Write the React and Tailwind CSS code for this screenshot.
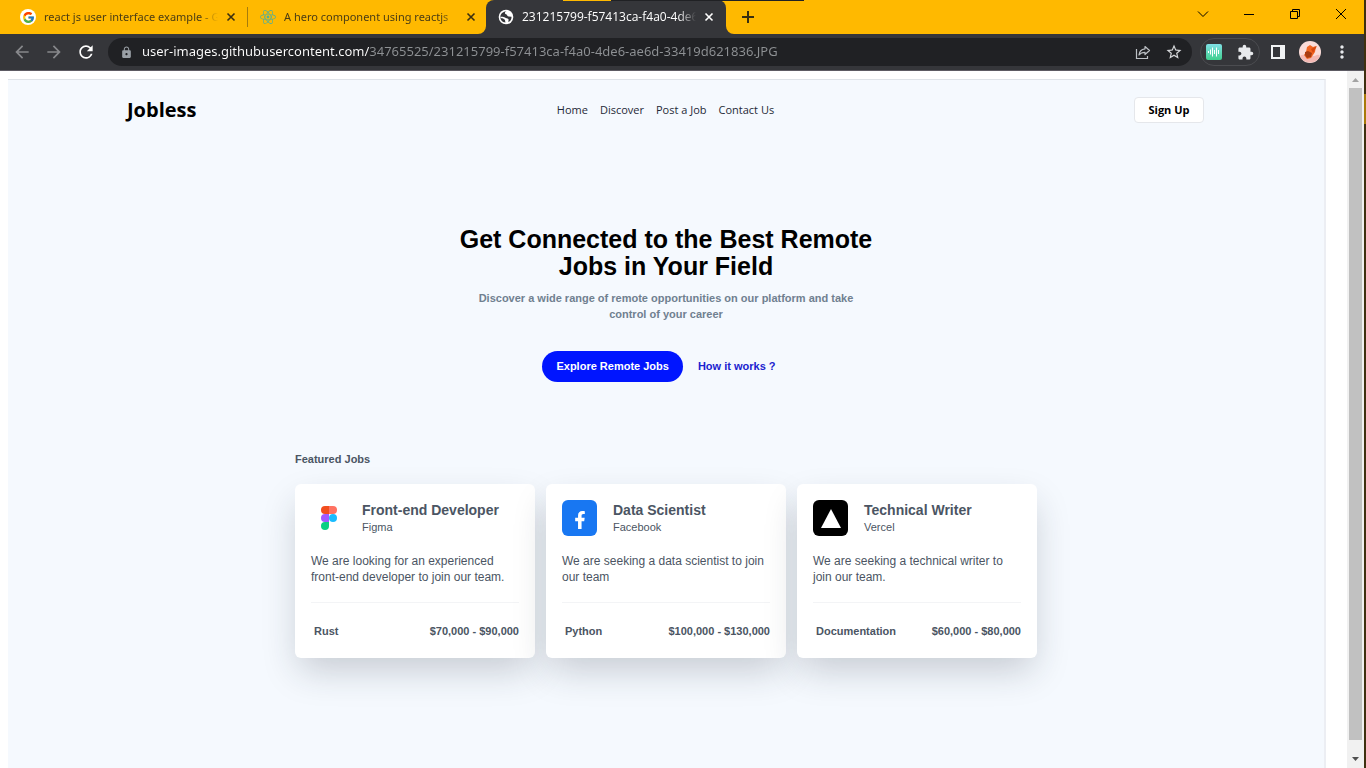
import React from "react";
import { FcGoogle } from "react-icons/fc";
import { FaReact, FaFacebookF } from "react-icons/fa";
import { MdArrowBack, MdArrowForward, MdRefresh, MdLock, MdStarBorder, MdExtension, MdMoreVert } from "react-icons/md";

const TABS = [
  { title: "react js user interface example - G", icon: "google" },
  { title: "A hero component using reactjs", icon: "react" },
  { title: "231215799-f57413ca-f4a0-4de6-", icon: "globe", active: true },
];

const JOBS = [
  {
    title: "Front-end Developer",
    company: "Figma",
    text: "We are looking for an experienced front-end developer to join our team.",
    tag: "Rust",
    pay: "$70,000 - $90,000",
  },
  {
    title: "Data Scientist",
    company: "Facebook",
    text: "We are seeking a data scientist to join our team",
    tag: "Python",
    pay: "$100,000 - $130,000",
  },
  {
    title: "Technical Writer",
    company: "Vercel",
    text: "We are seeking a technical writer to join our team.",
    tag: "Documentation",
    pay: "$60,000 - $80,000",
  },
];

function CloseIcon() {
  return (
    <svg width="10" height="10" viewBox="0 0 10 10" stroke="currentColor" strokeWidth="1.600" fill="none">
      <path d="M1.500 1.500l7 7M8.500 1.500l-7 7" />
    </svg>
  );
}

function TabIcon({ name }) {
  if (name === "google")
    return (
      <span className="flex size-4 shrink-0 items-center justify-center rounded-full bg-white">
        <FcGoogle size={13} />
      </span>
    );
  if (name === "react") return <FaReact size={16} className="shrink-0 text-[#4fae9c]" />;
  return (
    <svg width="16" height="16" viewBox="0 0 16 16" className="shrink-0">
      <circle cx="8" cy="8" r="7.300" fill="#fff" />
      <path d="M8.500 2.500c-1.300.3-1.800 1.200-1.500 2 .4.900 1.600.6 2 1.600.3.900.6 1.300 1.700 1.400l2.800.2c.2 2.300-1 4.400-3 5.300-.5-1 .6-2.100-.2-3C9.400 9.100 8 9.500 7 8.600 6 7.800 4.800 7.600 2.500 7.700c.1 1.200.6 1.500 1.800 1.600 1.200 0 1.300.9 2.200 1.200.8.300.4 1.400 1 2.900-3.200-.2-5.300-2.600-5.200-5.700C2.600 4.600 5.200 2.200 8.500 2.500z" fill="#35363a" />
    </svg>
  );
}

function Tab({ title, icon, active }) {
  return (
    <div
      className={
        active
          ? "relative flex h-full w-60 items-center rounded-t-lg bg-[#35363a] pr-3 pl-3 text-xs text-white"
          : "relative flex h-full w-60 items-center pr-3 pl-3 font-['Noto_Sans',sans-serif] text-[11px] text-[#4a3c14] first:w-62 first:pl-5"
      }
    >
      {active && (
        <>
          <svg className="absolute bottom-0 -left-2" width="8" height="8">
            <path d="M8 0v8H0a8 8 0 0 0 8-8z" fill="#35363a" />
          </svg>
          <svg className="absolute -right-2 bottom-0" width="8" height="8">
            <path d="M0 0v8h8a8 8 0 0 1-8-8z" fill="#35363a" />
          </svg>
        </>
      )}
      <TabIcon name={icon} />
      <span className="ml-2 min-w-0 flex-1 overflow-hidden mask-r-from-90% whitespace-nowrap">{title}</span>
      <button aria-label="Close tab" className={active ? "ml-2 text-white" : "ml-2 text-[#3a2f10]"}>
        <CloseIcon />
      </button>
    </div>
  );
}

function TabStrip() {
  return (
    <div className="flex h-[34px] shrink-0 items-center bg-[#ffb900]">
      <div className="relative flex h-full items-center">
        <Tab {...TABS[0]} />
        <span className="-ml-px h-5 w-px bg-[#a67c0c]" />
        <Tab {...TABS[1]} />
        <span className="-ml-0.5 w-0" />
        <Tab {...TABS[2]} />
        <span className="absolute top-0 left-[563px] h-px w-12 bg-[#ffb900]" />
        <span className="absolute top-0 left-[611px] h-px w-[193px] bg-[#202124]" />
      </div>
      <button aria-label="New tab" className="ml-4 text-[#3a2f10]">
        <svg width="12" height="12" viewBox="0 0 12 12" stroke="currentColor" strokeWidth="2">
          <path d="M6 0v12M0 6h12" />
        </svg>
      </button>
      <div className="ml-auto flex items-center gap-[34px] pr-[17px] pb-1.5 text-black">
        <button aria-label="Search tabs">
          <svg width="12" height="12" viewBox="0 0 12 12" stroke="currentColor" fill="none">
            <path d="M1 3.500l5 5 5-5" />
          </svg>
        </button>
        <button aria-label="Minimize">
          <svg width="12" height="12" viewBox="0 0 12 12" stroke="currentColor">
            <path d="M1 6.500h10" />
          </svg>
        </button>
        <button aria-label="Restore">
          <svg width="12" height="12" viewBox="0 0 12 12" stroke="currentColor" fill="none">
            <path d="M1.500 3.500h7v7h-7zM3.500 3.500v-2h7v7h-2" />
          </svg>
        </button>
        <button aria-label="Close window">
          <svg width="12" height="12" viewBox="0 0 12 12" stroke="currentColor">
            <path d="M1 1l10 10M11 1L1 11" />
          </svg>
        </button>
      </div>
    </div>
  );
}

function Toolbar() {
  return (
    <div className="flex h-[37px] shrink-0 items-center border-b border-[#5d5b63] bg-[#35363a] text-[#e8eaed]">
      <div className="flex items-center gap-3 pl-3 text-[#87888b]">
        <button aria-label="Back"><MdArrowBack size={20} /></button>
        <button aria-label="Forward"><MdArrowForward size={20} /></button>
        <button aria-label="Reload" className="text-white"><MdRefresh size={20} /></button>
      </div>
      <div className="ml-3 flex h-7 min-w-0 flex-1 items-center rounded-full bg-[#202124] pr-[9px] pl-3">
        <MdLock size={13} className="shrink-0 text-[#9aa0a6]" />
        <input
          aria-label="Address"
          defaultValue="user-images.githubusercontent.com/34765525/231215799-f57413ca-f4a0-4de6-ae6d-33419d621836.JPG"
          className="ml-[9px] min-w-0 flex-1 bg-linear-to-r from-white from-[227px] to-[#8e9194] to-[227px] bg-clip-text font-['Noto_Sans',sans-serif] text-[13px] text-transparent outline-none"
        />
        <button aria-label="Share" className="text-[#bdc1c6]">
          <svg width="16" height="16" viewBox="0 0 16 16" fill="none" stroke="currentColor" strokeWidth="1.200">
            <path d="M1.500 5v9.500h11V12" />
            <path d="M10 2.500l4.500 4-4.500 4V8.300C7.500 8.300 5.500 9 4 11c.3-3.500 2.500-5.800 6-6.200z" strokeLinejoin="round" />
          </svg>
        </button>
        <button aria-label="Bookmark" className="ml-[14px] text-[#d5d7da]"><MdStarBorder size={18} /></button>
      </div>
      <div className="ml-2 flex h-7 items-center gap-[15px] rounded-full border border-[#4b4c50] pr-[5px] pl-[5px]">
        <button aria-label="Audio extension" className="flex size-4 items-center justify-center rounded-xs bg-linear-to-b from-[#7fe0e6] to-[#3fcf8e]">
          <svg width="14" height="12" viewBox="0 0 14 12" stroke="#fff" strokeWidth="1">
            <path d="M1.500 5v2M3.500 3.500v5M5.500 1.500v9M7.500 4v4M9.500 1.500v9M11.500 4v4" />
          </svg>
        </button>
        <button aria-label="Extensions"><MdExtension size={17} /></button>
      </div>
      <button aria-label="Side panel" className="ml-[11px]">
        <svg width="14" height="14" viewBox="0 0 14 14">
          <path d="M0 0h14v14H0zM2 2v10h7V2z" fill="#f1f3f4" fillRule="evenodd" />
        </svg>
      </button>
      <button aria-label="Profile" className="ml-[14px]">
        <svg width="22" height="22" viewBox="0 0 22 22">
          <circle cx="11" cy="11" r="11" fill="#fbdcd8" />
          <path d="M1 15a11 11 0 0 0 20 0c-2-3-4 0-7 0s-10-3-13 0z" fill="#f3b9b4" />
          <path d="M8 6l3-2 3 2 3-1-1 6-4 6-4 1-3-4 2-3z" fill="#f26522" />
          <path d="M6 11l3-1 4 2-1 4-4 1-2-3z" fill="#a83c12" />
          <path d="M12 8l6-3-4 7z" fill="#d9480f" />
        </svg>
      </button>
      <button aria-label="Menu" className="mr-3 ml-[11px]"><MdMoreVert size={20} /></button>
    </div>
  );
}

function FigmaLogo() {
  return (
    <span className="flex size-[35px] items-center justify-center">
      <svg width="16" height="24" viewBox="0 0 16 24">
        <path d="M4 0h4v8H4a4 4 0 0 1 0-8z" fill="#f24e1e" />
        <path d="M8 0h4a4 4 0 0 1 0 8H8z" fill="#ff7262" />
        <path d="M4 8h4v8H4a4 4 0 0 1 0-8z" fill="#a259ff" />
        <circle cx="12" cy="12" r="4" fill="#1abcfe" />
        <path d="M4 16h4v4a4 4 0 1 1-4-4z" fill="#0acf83" />
      </svg>
    </span>
  );
}

function CompanyLogo({ company }) {
  if (company === "Figma") return <FigmaLogo />;
  if (company === "Facebook")
    return (
      <span className="flex h-9 w-[35px] items-center justify-center rounded-md bg-[#1877f2] pt-1 text-white">
        <FaFacebookF size={18} />
      </span>
    );
  return (
    <span className="flex h-9 w-[35px] items-center justify-center rounded-md bg-black">
      <svg width="20" height="19" viewBox="0 0 20 19">
        <path d="M10 0l10 19H0z" fill="#fff" />
      </svg>
    </span>
  );
}

function JobCard({ title, company, text, tag, pay }) {
  return (
    <article className="rounded-md bg-white px-4 pt-4 pb-[19px] text-[#4b5563] shadow-[0_16px_36px_-4px_rgba(31,41,55,0.22)]">
      <div className="flex h-9 items-center gap-4">
        <CompanyLogo company={company} />
        <div>
          <h3 className="text-sm leading-[18px] font-bold whitespace-nowrap">{title}</h3>
          <p className="text-[11px] leading-4">{company}</p>
        </div>
      </div>
      <p className="mt-[17px] text-xs leading-4">{text}</p>
      <div className="mt-[17px] flex justify-between border-t border-[#f3f4f6] pt-5 pl-[3px] text-[11px] leading-4 font-bold">
        <span>{tag}</span>
        <span>{pay}</span>
      </div>
    </article>
  );
}

function LandingPage() {
  return (
    <div className="mt-2 mr-[21px] ml-2 min-h-0 flex-1 overflow-hidden border-t border-r-2 border-t-[#dfe3e8] border-r-[#eceef3] bg-[#f5f9fe] font-['Liberation_Sans',sans-serif]">
      <header className="mr-[120px] ml-[119px] flex items-center justify-between pt-[17px] font-['Open_Sans','Noto_Sans',sans-serif]">
        <a href="#home" className="w-[70px] text-xl leading-[26px] font-bold text-black">Jobless</a>
        <nav className="flex gap-3 text-[11px] text-[#1f2937]">
          <a href="#home">Home</a>
          <a href="#discover">Discover</a>
          <a href="#post">Post a Job</a>
          <a href="#contact">Contact Us</a>
        </nav>
        <button className="h-[26px] w-[70px] rounded-sm border border-[#e5e7eb] bg-white text-[11px] font-bold text-black">Sign Up</button>
      </header>
      <main className="flex flex-col items-center">
        <h1 className="mt-[103px] w-[440px] text-center text-[25px] leading-[27px] font-bold text-black">
          Get Connected to the Best Remote Jobs in Your Field
        </h1>
        <p className="mt-[10px] w-[400px] text-center text-[11px] leading-4 font-bold text-[#708090]">
          Discover a wide range of remote opportunities on our platform and take control of your career
        </p>
        <div className="mt-[29px] flex items-center gap-[15px] pr-[14px] text-[11px] font-bold">
          <button className="h-[31px] rounded-full bg-[#0015ff] px-[14px] text-white">Explore Remote Jobs</button>
          <a href="#how" className="text-[#1a22cf]">How it works ?</a>
        </div>
        <section className="mt-[69px] w-full max-w-[742px]">
          <h2 className="text-[11px] leading-4 font-bold text-[#4b5563]">Featured Jobs</h2>
          <div className="mt-[17px] grid grid-cols-3 gap-[11px]">
            {JOBS.map((job) => (
              <JobCard key={job.company} {...job} />
            ))}
          </div>
        </section>
      </main>
    </div>
  );
}

function ScrollBar() {
  return (
    <div className="flex w-[17px] shrink-0 flex-col items-center bg-[#f1f1f1]">
      <svg width="17" height="17" viewBox="0 0 17 17"><path d="M5 11l3.500-4 3.500 4z" fill="#a3a3a3" /></svg>
      <div className="mb-[11px] w-[13px] flex-1 bg-[#c1c1c1]" />
      <svg width="17" height="17" viewBox="0 0 17 17"><path d="M5 6l3.500 4L12 6z" fill="#505050" /></svg>
    </div>
  );
}

export default function App() {
  return (
    <div className="flex h-screen overflow-hidden bg-white font-['Open_Sans','Noto_Sans',sans-serif]">
      <div className="flex min-w-0 flex-1 flex-col">
        <TabStrip />
        <Toolbar />
        <div className="flex min-h-0 flex-1">
          <div className="flex min-w-0 flex-1 flex-col">
            <LandingPage />
          </div>
          <ScrollBar />
        </div>
      </div>
      <div className="w-0.5 shrink-0 bg-[#3f3010] pt-[94px]">
        <div className="h-[30px] bg-[#a87a0a]" />
      </div>
    </div>
  );
}
